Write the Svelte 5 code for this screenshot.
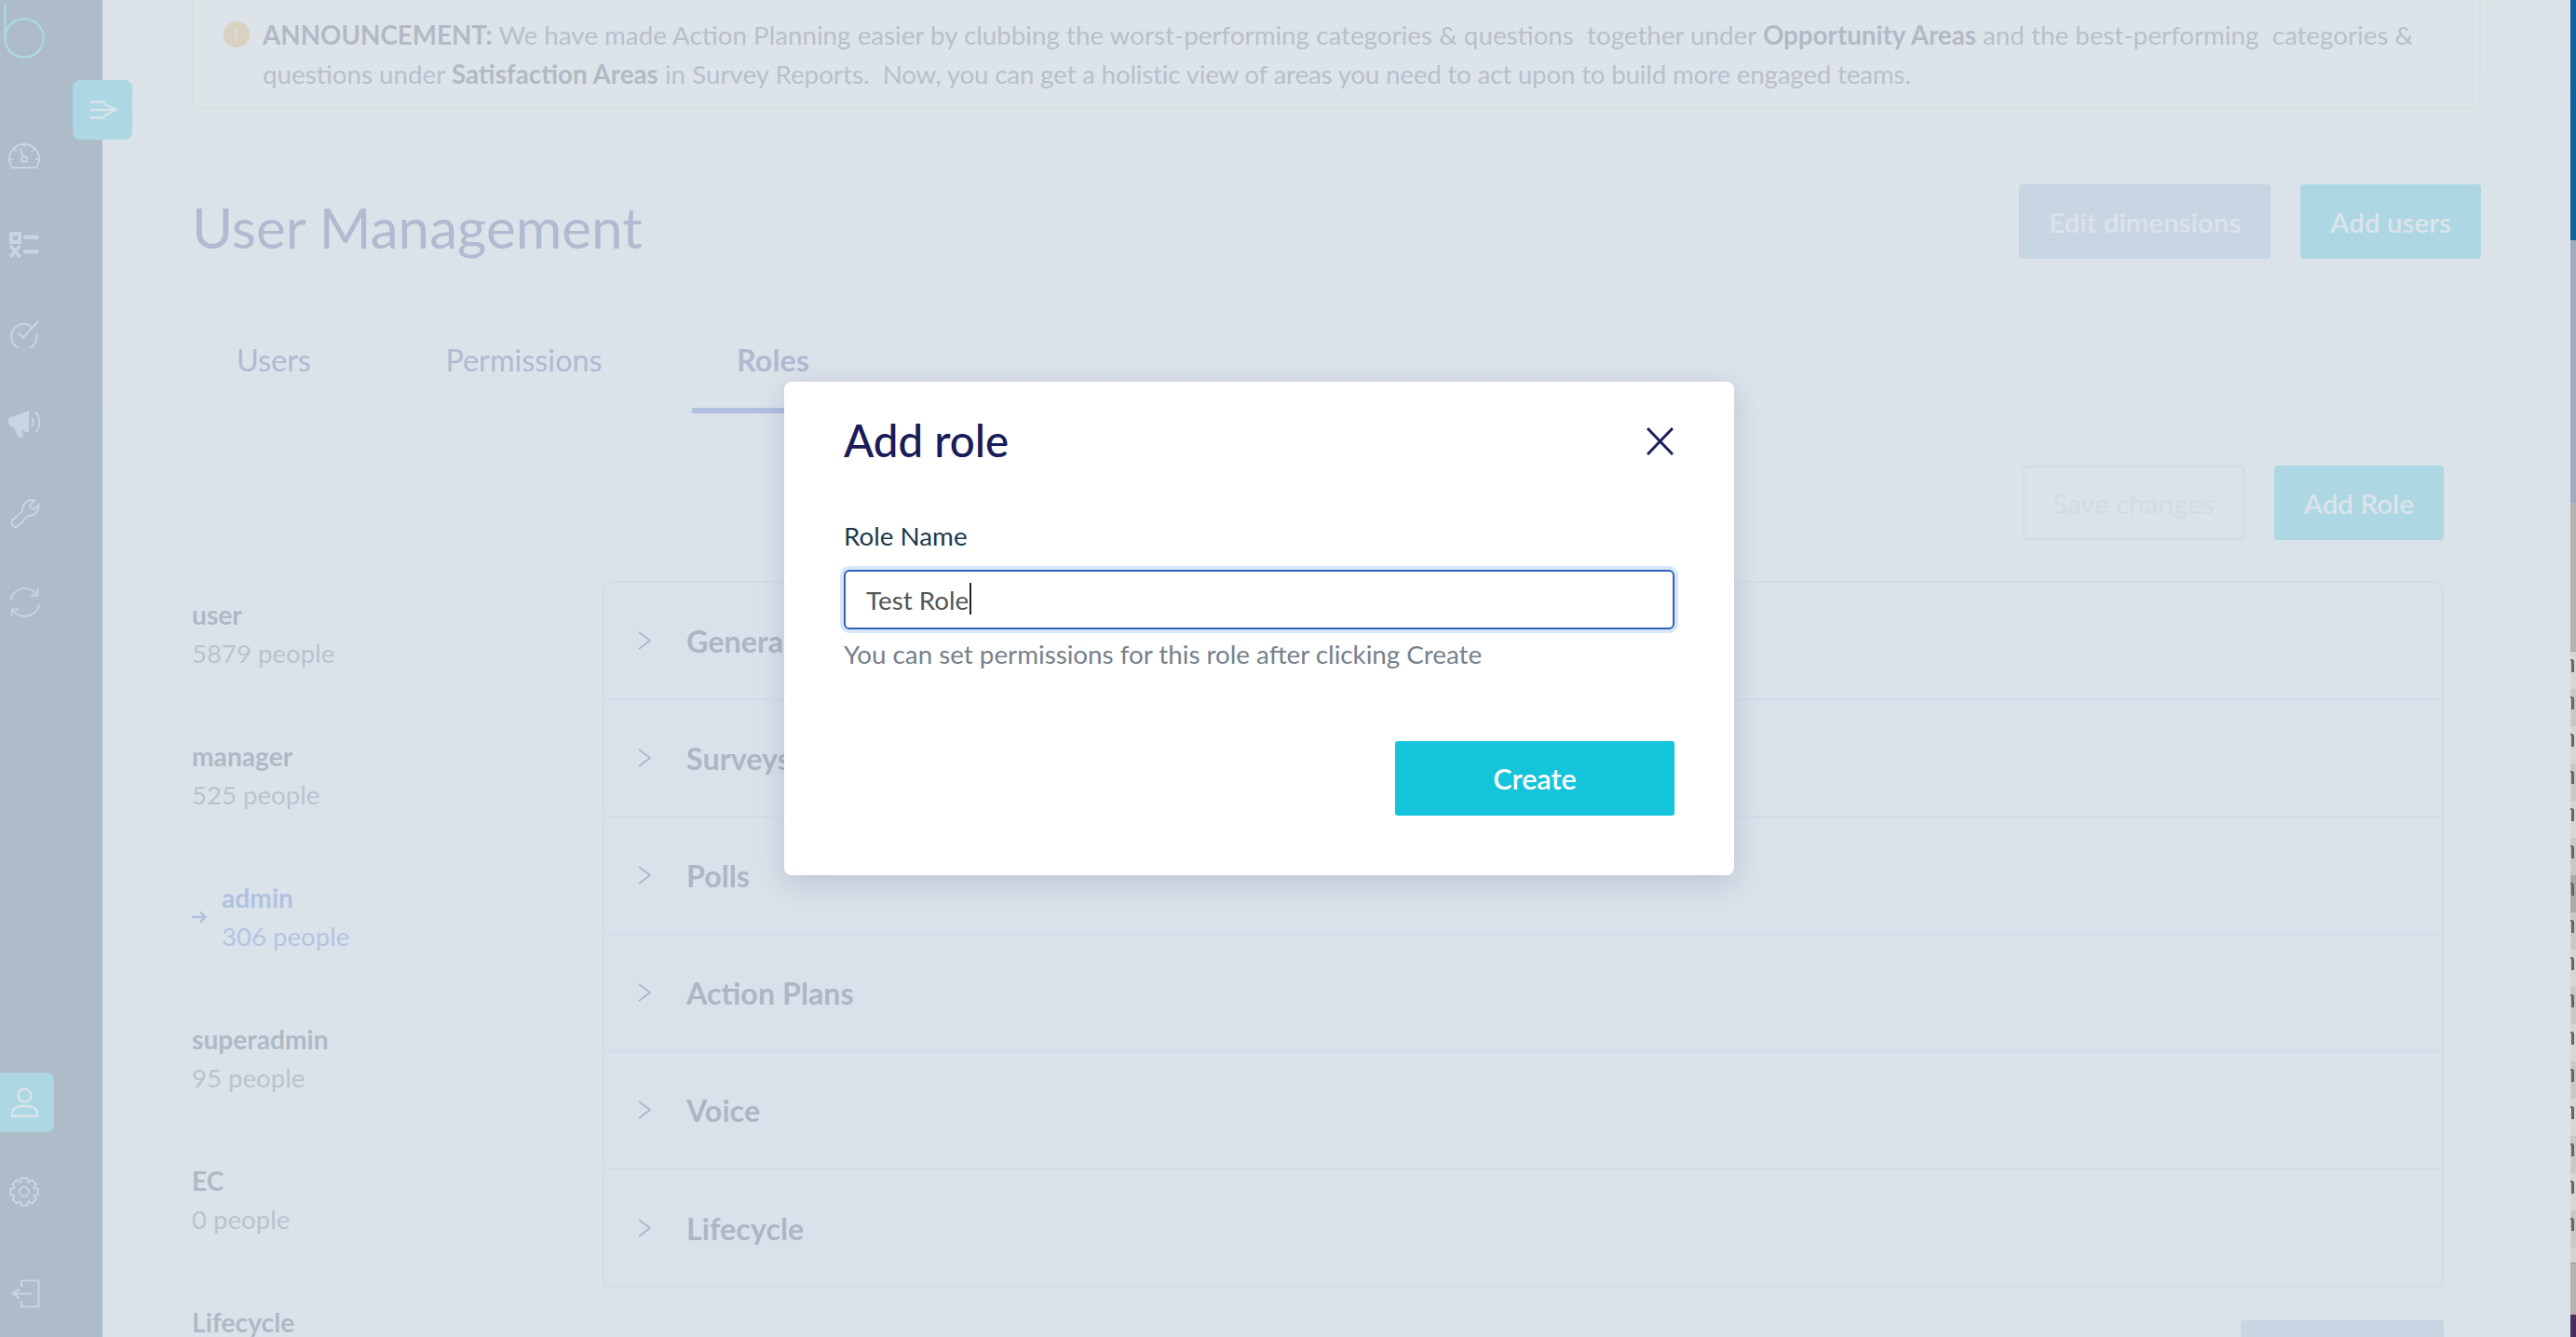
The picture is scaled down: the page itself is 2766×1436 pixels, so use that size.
<script>
  const roles = [
    { name: 'user', count: '5879 people' },
    { name: 'manager', count: '525 people' },
    { name: 'admin', count: '306 people', active: true },
    { name: 'superadmin', count: '95 people' },
    { name: 'EC', count: '0 people' },
    { name: 'Lifecycle', count: '0 people' },
  ]
  const sections = ['General', 'Surveys', 'Polls', 'Action Plans', 'Voice', 'Lifecycle']
  const tabs = ['Users', 'Permissions', 'Roles']
  const glyphRows = Array.from({ length: 16 }, (_, i) => i)

  // 8 tooth gear outline, centred on 16,16
  function gearPath() {
    let d = ''
    const teeth = 8
    for (let i = 0; i < teeth; i++) {
      const a = (i / teeth) * Math.PI * 2
      const pts = [
        [-0.39, 11.4],
        [-0.2, 15],
        [0.2, 15],
        [0.39, 11.4],
      ]
      for (const [off, r] of pts) {
        const x = 16 + Math.cos(a + off) * r
        const y = 16 + Math.sin(a + off) * r
        d += (d ? 'L' : 'M') + x.toFixed(1) + ' ' + y.toFixed(1)
      }
    }
    return d + 'Z'
  }
</script>

<div class="window">
  <div class="app">
    <aside class="sidebar">
      <div class="logo">
        <svg width="50" height="66" viewBox="0 0 50 66" fill="none" stroke="#13c4da" stroke-width="2.4">
          <path d="M5.5 4V41" />
          <circle cx="26" cy="41" r="20.7" />
        </svg>
      </div>

      <button class="toggle" aria-label="Toggle menu">
        <svg width="30" height="20" viewBox="0 0 30 20" fill="none" stroke="#fff" stroke-width="2.6">
          <path d="M0 1.5H15.5M0 10H27M0 18.5H15.5" />
          <path d="M14.5 3.5L27.5 10L14.5 16.5" stroke-width="2.2" />
        </svg>
      </button>

      <nav class="nav">
        <div class="nav-item">
          <svg width="34" height="28" viewBox="0 0 34 28" fill="none" stroke="#9bb4d2" stroke-width="2">
            <path d="M4 27A16 16 0 1 1 30 27Z" />
            <path d="M17 1V5M6 7L9 9.5M28 7L25 9.5M1 18H5M33 18H29" />
            <path d="M13 6.5L15.7 15" />
            <circle cx="17" cy="18" r="3" />
          </svg>
        </div>
        <div class="nav-item">
          <svg width="32" height="28" viewBox="0 0 32 28" fill="#9bb4d2">
            <path d="M0 0H13V13H0ZM4 4V9H9V4Z" fill-rule="evenodd" />
            <rect x="15" y="3.5" width="17" height="4.5" rx="2.2" />
            <rect x="15" y="19" width="17" height="4.5" rx="2.2" />
            <path d="M1 15L11.5 27M11.5 15L1 27" stroke="#9bb4d2" stroke-width="3.6" />
          </svg>
        </div>
        <div class="nav-item">
          <svg width="31" height="30" viewBox="0 0 31 30" fill="none" stroke="#9bb4d2" stroke-width="2">
            <path d="M24 7.5A13.7 13.7 0 1 0 28 14" />
            <path d="M8.5 13.5L14 18.5L30 1" stroke-width="2.2" />
          </svg>
        </div>
        <div class="nav-item">
          <svg width="35" height="29" viewBox="0 0 35 29" fill="#9bb4d2">
            <path d="M0 11C0 8 2 6.5 5 6.5L22 0V24L14 21L16 27C15 29 12 29.5 10.5 28L6 18.5C2 18 0 15 0 11Z" />
            <path d="M25 8C27.5 10.5 27.5 15 25 17.5M29 1.5C34.5 7 34.5 18 29 23.5" fill="none" stroke="#9bb4d2" stroke-width="2" />
          </svg>
        </div>
        <div class="nav-item">
          <svg width="33" height="33" viewBox="0 0 33 33" fill="none" stroke="#9bb4d2" stroke-width="2">
            <path d="M3 24L14 14C13 8 18 2 25 2L27.5 2.5L22 7.5L23 11L27 12L31.5 7C32.5 14 27 19.5 20 19L9 30C6 33 1 29 3 24Z" />
          </svg>
        </div>
        <div class="nav-item">
          <svg width="33" height="34" viewBox="0 0 33 34" fill="none" stroke="#9bb4d2" stroke-width="1.8">
            <path d="M1 15A16 16 0 0 1 30 9" />
            <path d="M30.5 2V9.5H23" />
            <path d="M32 19A16 16 0 0 1 3 25" />
            <path d="M2.5 32V24.5H10" />
          </svg>
        </div>
      </nav>

      <div class="nav-bottom">
        <div class="user-item">
          <svg width="29" height="32" viewBox="0 0 29 32" fill="none" stroke="#fff" stroke-width="2.4">
            <circle cx="14.5" cy="8.5" r="7" />
            <path d="M1.2 30.8V27C1.2 22 8 19.8 14.5 19.8C21 19.8 27.8 22 27.8 27V30.8Z" />
          </svg>
        </div>
        <div class="gear-item">
          <svg width="32" height="32" viewBox="0 0 32 32" fill="none" stroke="#9bb4d2" stroke-width="2">
            <path d={gearPath()} />
            <circle cx="16" cy="16" r="5" />
          </svg>
        </div>
        <div class="logout-item">
          <svg width="31" height="31" viewBox="0 0 31 31" fill="none" stroke="#9bb4d2" stroke-width="2.2">
            <path d="M11 8V2.5C11 2 11.5 1.5 12 1.5H28.5C29 1.5 29.5 2 29.5 2.5V28.5C29.5 29 29 29.5 28.5 29.5H12C11.5 29.5 11 29 11 28.5V23" />
            <path d="M22 15.5H3M9 10.5L2 15.5L9 20.5" />
          </svg>
        </div>
      </div>
    </aside>

    <main class="main">
      <div class="banner">
        <span class="banner-icon">!</span>
        <p>
          <b>ANNOUNCEMENT:</b> We have made Action Planning easier by clubbing the worst-performing categories &amp; questions&nbsp; together under <b>Opportunity Areas</b> and the best-performing&nbsp; categories &amp; questions under <b>Satisfaction Areas</b> in Survey Reports.&nbsp; <span class="tight">Now, you can get a holistic view of areas you need to act upon to build more engaged teams.</span>
        </p>
      </div>

      <div class="page-head">
        <h1>User Management</h1>
        <div class="head-actions">
          <button class="btn muted">Edit dimensions</button>
          <button class="btn primary">Add users</button>
        </div>
      </div>

      <div class="tabs">
        {#each tabs as t}
          <div class="tab" class:active={t === 'Roles'}>{t}</div>
        {/each}
      </div>

      <div class="role-actions">
        <button class="btn outline">Save changes</button>
        <button class="btn primary">Add Role</button>
      </div>

      <div class="roles-body">
        <ul class="role-list">
          {#each roles as r}
            <li class:active={r.active}>
              {#if r.active}
                <svg class="role-arrow" width="16" height="14" viewBox="0 0 16 14" fill="none" stroke="#2459cc" stroke-width="2.6">
                  <path d="M0 7H14.5M9 1.5L14.5 7L9 12.5" />
                </svg>
              {/if}
              <div>
                <div class="role-name">{r.name}</div>
                <div class="role-count">{r.count}</div>
              </div>
            </li>
          {/each}
        </ul>

        <div class="perm-col">
          <div class="accordion">
            {#each sections as s}
              <div class="acc-row">
                <svg width="14" height="20" viewBox="0 0 14 20" fill="none" stroke="#121440" stroke-width="1.6">
                  <path d="M1 1L13 10L1 19" />
                </svg>
                <span>{s}</span>
              </div>
            {/each}
          </div>
          <div class="perm-foot">
            <button class="btn muted">Save</button>
          </div>
        </div>
      </div>
    </main>

    <div class="overlay"></div>

    <div class="modal" role="dialog">
      <div class="modal-head">
        <h2>Add role</h2>
        <button class="close" aria-label="Close">
          <svg width="29" height="30" viewBox="0 0 29 30" fill="none" stroke="#1b1f5c" stroke-width="3">
            <path d="M1 1L28 29M28 1L1 29" />
          </svg>
        </button>
      </div>
      <label for="role-name">Role Name</label>
      <div class="input-wrap">
        <input id="role-name" type="text" value="Test Role" />
        <span class="caret"></span>
      </div>
      <p class="help">You can set permissions for this role after clicking Create</p>
      <div class="modal-foot">
        <button class="create">Create</button>
      </div>
    </div>
  </div>

  <div class="behind">
    <div class="seg blue"></div>
    <div class="seg slate"></div>
    <div class="seg mauve"></div>
    <div class="seg list">
      {#each glyphRows as i}
        <div class="glyph-row" class:alt={i % 2 === 1} class:dark={i === 6}>
          <span class="glyph"></span>
        </div>
      {/each}
    </div>
    <div class="seg mauve end"></div>
    <div class="seg purple"></div>
  </div>
</div>

<style>
  :global(body) {
    margin: 0;
    font-family: Lato, 'Open Sans', sans-serif;
    overflow: hidden;
  }
  .window {
    display: flex;
    width: 2766px;
    height: 1436px;
    overflow: hidden;
  }
  .app {
    position: relative;
    flex: 1;
    display: flex;
    overflow: hidden;
    background: linear-gradient(#fdfffb 0, #f6f8fd 450px);
  }

  /* sidebar */
  .sidebar {
    position: relative;
    flex: none;
    width: 110px;
    display: flex;
    flex-direction: column;
    background: #1a3759;
  }
  .logo {
    height: 119px;
  }
  .logo svg {
    display: block;
  }
  .toggle {
    position: absolute;
    left: 78px;
    top: 86px;
    width: 64px;
    height: 64px;
    display: flex;
    align-items: center;
    justify-content: center;
    padding: 0 0 0 3px;
    border: none;
    border-radius: 8px;
    background: #13c4da;
  }
  .nav {
    display: flex;
    flex-direction: column;
  }
  .nav-item {
    width: 52px;
    height: 96px;
    display: flex;
    align-items: center;
    justify-content: center;
  }
  .nav-bottom {
    margin-top: auto;
    padding-bottom: 15px;
  }
  .user-item {
    width: 58px;
    height: 64px;
    padding-right: 6px;
    box-sizing: border-box;
    display: flex;
    align-items: center;
    justify-content: center;
    background: #13c4da;
    border-radius: 0 8px 8px 0;
  }
  .gear-item {
    width: 52px;
    height: 96px;
    margin-top: 16px;
    display: flex;
    align-items: center;
    justify-content: center;
  }
  .logout-item {
    width: 54px;
    height: 64px;
    margin-top: 29px;
    display: flex;
    align-items: center;
    justify-content: center;
  }

  /* main */
  .main {
    flex: 1;
    min-width: 0;
    padding: 0 96px;
    overflow: hidden;
  }
  .banner {
    display: flex;
    gap: 14px;
    margin-top: -6px;
    height: 123px;
    box-sizing: border-box;
    padding: 21px 30px 0 32px;
    background: #fffffb;
    border: 2px solid #f4edc4;
    border-radius: 8px;
  }
  .banner p {
    margin: 0;
    font-size: 27.75px;
    line-height: 42px;
    color: #4a4a68;
  }
  .banner b {
    color: #2d2d4a;
  }
  .tight {
    letter-spacing: -0.2px;
  }
  .banner-icon {
    flex: none;
    width: 28px;
    height: 28px;
    margin-top: 6px;
    border-radius: 50%;
    background: #f0aa2d;
    color: #fff;
    font-size: 18px;
    line-height: 28px;
    text-align: center;
  }
  .page-head {
    display: flex;
    align-items: center;
    justify-content: space-between;
    margin-top: 81px;
  }
  h1 {
    margin: 0;
    padding-top: 12px;
    font-size: 60.2px;
    line-height: 68px;
    font-weight: 400;
    color: #24327c;
  }
  .head-actions {
    display: flex;
    gap: 32px;
  }
  .btn {
    height: 80px;
    padding: 0 32px;
    border: none;
    border-radius: 4px;
    font: 600 29.6px Lato, sans-serif;
    color: #fff;
    white-space: nowrap;
  }
  .btn.primary {
    background: #13c4da;
  }
  .btn.muted {
    background: #9cb9db;
  }
  .btn.outline {
    padding: 0 30px;
    background: transparent;
    border: 2px solid #d2d2eb;
    color: #d2d2eb;
    font-weight: 400;
  }
  .tabs {
    display: flex;
    gap: 48.5px;
    margin-top: 50px;
    height: 116px;
    box-sizing: border-box;
    border-bottom: 2px solid #e8eaf6;
  }
  .tab {
    height: 116px;
    box-sizing: border-box;
    padding: 0 48px;
    display: flex;
    align-items: center;
    font-size: 32.4px;
    color: #22307c;
  }
  .tab.active {
    font-weight: 700;
    border-bottom: 6px solid #2450c3;
    padding-top: 6px;
  }
  .role-actions {
    display: flex;
    justify-content: flex-end;
    gap: 32px;
    margin: 56px 40px 0 0;
  }
  .roles-body {
    display: flex;
    margin-top: 44px;
  }
  .role-list {
    flex: none;
    width: 441px;
    margin: 0;
    padding: 15px 0 0;
    list-style: none;
  }
  .role-list li {
    display: flex;
    align-items: center;
    gap: 16px;
    margin-bottom: 68px;
    font-size: 27.6px;
    line-height: 42px;
  }
  .role-name {
    font-size: 28.2px;
    font-weight: 700;
    color: #24284a;
  }
  .role-count {
    color: #5c5a70;
  }
  .role-list li.active .role-name {
    color: #2459cc;
  }
  .role-list li.active .role-count {
    color: #3566cf;
  }
  .perm-col {
    width: 1977px;
  }
  .accordion {
    border: 2px solid #dadaf2;
    border-radius: 8px;
    background: #f1f2fd;
  }
  .acc-row {
    display: flex;
    align-items: center;
    gap: 38px;
    height: 126px;
    box-sizing: border-box;
    padding-left: 36px;
    border-bottom: 2px solid #dadaf2;
    font-size: 32.3px;
    font-weight: 700;
    color: #1a1a3c;
  }
  .acc-row:last-child {
    border-bottom: none;
  }
  .perm-foot {
    display: flex;
    justify-content: flex-end;
    margin-top: 34px;
  }
  .perm-foot .btn {
    width: 218px;
  }

  /* overlay + modal */
  .overlay {
    position: absolute;
    inset: 0;
    background: rgba(211, 220, 229, 0.8);
  }
  .modal {
    position: absolute;
    left: 842px;
    top: 410px;
    width: 1020px;
    height: 530px;
    box-sizing: border-box;
    padding: 33px 64px 0;
    background: #fff;
    border-radius: 8px;
    box-shadow: 0 8px 30px rgba(20, 30, 70, 0.14);
  }
  .modal-head {
    display: flex;
    align-items: center;
    justify-content: space-between;
    height: 58px;
    margin-bottom: 58px;
  }
  h2 {
    margin: 0;
    font-size: 47.5px;
    font-weight: 500;
    color: #191c58;
  }
  .close {
    display: flex;
    margin: 4px 1px 0 0;
    padding: 0;
    border: none;
    background: none;
  }
  label {
    display: block;
    font-size: 27.75px;
    line-height: 34px;
    color: #1c3a4e;
  }
  .input-wrap {
    position: relative;
    margin-top: 19px;
  }
  input {
    display: block;
    width: 100%;
    height: 64px;
    box-sizing: border-box;
    padding: 0 22px;
    border: 2.5px solid #3560b8;
    border-radius: 6px;
    outline: none;
    box-shadow: 0 0 0 4px #d6e6fb;
    font: 400 27.75px Lato, sans-serif;
    color: #555;
  }
  .caret {
    position: absolute;
    left: 135px;
    top: 14px;
    width: 2px;
    height: 34px;
    background: #222;
  }
  .help {
    margin: 8px 0 0;
    font-size: 27.75px;
    line-height: 38px;
    color: #76818b;
  }
  .modal-foot {
    display: flex;
    justify-content: flex-end;
    margin-top: 74px;
  }
  .create {
    width: 300px;
    height: 80px;
    border: none;
    border-radius: 3px;
    background: #13c4da;
    color: #fff;
    font: 600 30.5px Lato, sans-serif;
  }

  /* sliver of whatever window sits behind the browser */
  .behind {
    flex: none;
    width: 6px;
    display: flex;
    flex-direction: column;
    background: #d4d4d4;
  }
  .seg.blue {
    height: 258px;
    background: #11619a;
  }
  .seg.slate {
    height: 282px;
    background: #9fa9bf;
  }
  .seg.mauve {
    height: 159px;
    background: #b9b0b2;
  }
  .seg.list {
    height: 657px;
    border-top: 1px solid #a9a9a9;
    box-sizing: border-box;
  }
  .glyph-row {
    height: 40px;
    position: relative;
    background: #d6d6d4;
  }
  .glyph-row.alt {
    background: #c8c8c6;
  }
  .glyph-row.dark {
    background: #a9a9a7;
  }
  .glyph {
    position: absolute;
    left: 0;
    top: 8px;
    width: 4px;
    height: 14px;
    box-sizing: border-box;
    border-top: 2px solid #666;
    border-right: 3px solid #666;
    border-top-right-radius: 3px;
  }
  .seg.end {
    height: 56px;
    border-top: 1px solid #999;
    box-sizing: border-box;
  }
  .seg.purple {
    height: 24px;
    background: #47305f;
  }
</style>
